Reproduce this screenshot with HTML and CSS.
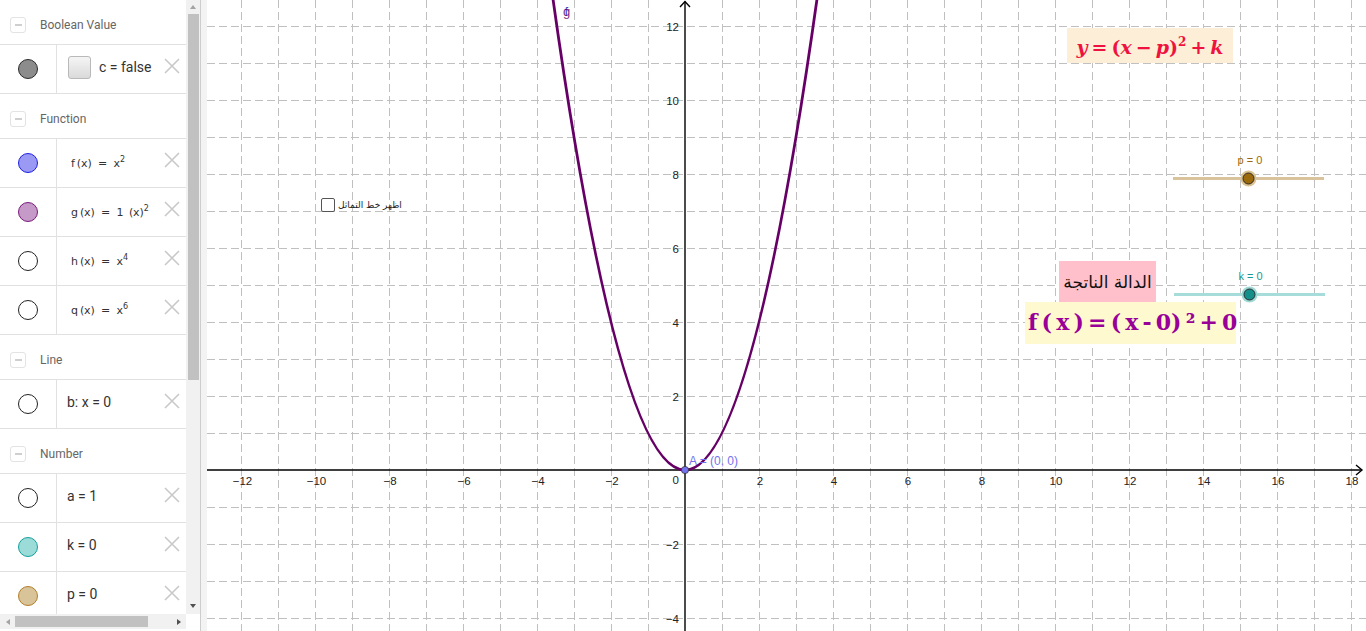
FILE: index.html
```html
<!DOCTYPE html>
<html lang="en">
<head>
<meta charset="utf-8">
<title>GeoGebra</title>
<link rel="stylesheet" href="styles.css">
</head>
<body>
<div class="app">
  <aside class="algebra">
    <div class="alg-body">
      <div class="alg-list">
        <div class="group"><span class="minus"></span><span class="gtitle">Boolean Value</span></div>
        <div class="item">
          <div class="marble"><span class="dot dot-gray"></span></div>
          <div class="content pad-cb"><span class="cbx"></span><span class="expr">c = false</span></div>
          <svg class="del" viewBox="0 0 16 16"><path d="M1 1L15 15M15 1L1 15"/></svg>
        </div>
        <div class="group"><span class="minus"></span><span class="gtitle">Function</span></div>
        <div class="item">
          <div class="marble"><span class="dot dot-blue"></span></div>
          <div class="content pad-fn"><span class="fn">f<span class="par">(x)</span> <span class="eq">=</span> x<sup>2</sup></span></div>
          <svg class="del" viewBox="0 0 16 16"><path d="M1 1L15 15M15 1L1 15"/></svg>
        </div>
        <div class="item">
          <div class="marble"><span class="dot dot-purple"></span></div>
          <div class="content pad-fn"><span class="fn">g<span class="par">(x)</span> <span class="eq">=</span> 1 <span class="par">(x)</span><sup>2</sup></span></div>
          <svg class="del" viewBox="0 0 16 16"><path d="M1 1L15 15M15 1L1 15"/></svg>
        </div>
        <div class="item">
          <div class="marble"><span class="dot dot-empty"></span></div>
          <div class="content pad-fn"><span class="fn">h<span class="par">(x)</span> <span class="eq">=</span> x<sup>4</sup></span></div>
          <svg class="del" viewBox="0 0 16 16"><path d="M1 1L15 15M15 1L1 15"/></svg>
        </div>
        <div class="item">
          <div class="marble"><span class="dot dot-empty"></span></div>
          <div class="content pad-fn"><span class="fn">q<span class="par">(x)</span> <span class="eq">=</span> x<sup>6</sup></span></div>
          <svg class="del" viewBox="0 0 16 16"><path d="M1 1L15 15M15 1L1 15"/></svg>
        </div>
        <div class="group"><span class="minus"></span><span class="gtitle">Line</span></div>
        <div class="item">
          <div class="marble"><span class="dot dot-empty"></span></div>
          <div class="content"><span class="expr">b: x = 0</span></div>
          <svg class="del" viewBox="0 0 16 16"><path d="M1 1L15 15M15 1L1 15"/></svg>
        </div>
        <div class="group"><span class="minus"></span><span class="gtitle">Number</span></div>
        <div class="item">
          <div class="marble"><span class="dot dot-empty"></span></div>
          <div class="content"><span class="expr">a = 1</span></div>
          <svg class="del" viewBox="0 0 16 16"><path d="M1 1L15 15M15 1L1 15"/></svg>
        </div>
        <div class="item">
          <div class="marble"><span class="dot dot-teal"></span></div>
          <div class="content"><span class="expr">k = 0</span></div>
          <svg class="del" viewBox="0 0 16 16"><path d="M1 1L15 15M15 1L1 15"/></svg>
        </div>
        <div class="item">
          <div class="marble"><span class="dot dot-tan"></span></div>
          <div class="content"><span class="expr">p = 0</span></div>
          <svg class="del" viewBox="0 0 16 16"><path d="M1 1L15 15M15 1L1 15"/></svg>
        </div>
      </div>
      <div class="vscroll">
        <span class="arrow-area"><span class="tri tri-up"></span></span>
        <div class="vthumb"></div>
        <div class="spacer"></div>
        <span class="arrow-area arrow-down"><span class="tri tri-down"></span></span>
      </div>
    </div>
    <div class="hscroll">
      <div class="hbar">
        <span class="harrow"><span class="tri tri-left"></span></span>
        <div class="hthumb"></div>
        <div class="spacer"></div>
        <span class="harrow"><span class="tri tri-right"></span></span>
      </div>
      <div class="corner"></div>
    </div>
  </aside>
  <div class="splitter"></div>
  <main class="graphics">
    <svg class="plot" width="1159" height="631" viewBox="207 0 1159 631" xmlns="http://www.w3.org/2000/svg">
      <path class="grid" d="M241.5 0V631M278.5 0V631M315.5 0V631M352.5 0V631M389.5 0V631M426.5 0V631M463.5 0V631M500.5 0V631M537.5 0V631M574.5 0V631M611.5 0V631M648.5 0V631M722.5 0V631M759.5 0V631M796.5 0V631M833.5 0V631M870.5 0V631M907.5 0V631M944.5 0V631M981.5 0V631M1018.5 0V631M1055.5 0V631M1092.5 0V631M1129.5 0V631M1166.5 0V631M1203.5 0V631M1240.5 0V631M1277.5 0V631M1314.5 0V631M1351.5 0V631"/>
      <path class="grid" d="M207 26.5H1366M207 63.5H1366M207 100.5H1366M207 137.5H1366M207 174.5H1366M207 211.5H1366M207 248.5H1366M207 285.5H1366M207 322.5H1366M207 359.5H1366M207 396.5H1366M207 433.5H1366M207 507.5H1366M207 544.5H1366M207 581.5H1366M207 618.5H1366"/>
      <path class="axis" d="M207 470H1362M685 631V1.5"/>
      <path class="axis" d="M1356 465L1362 470L1356 475M680 7L685 1.5L690 7"/>
      <g class="xlab">
        <text x="242.5" y="485">−12</text>
        <text x="316.5" y="485">−10</text>
        <text x="390" y="485">−8</text>
        <text x="464" y="485">−6</text>
        <text x="538" y="485">−4</text>
        <text x="612" y="485">−2</text>
        <text x="760" y="485">2</text>
        <text x="834" y="485">4</text>
        <text x="908" y="485">6</text>
        <text x="982" y="485">8</text>
        <text x="1056" y="485">10</text>
        <text x="1130" y="485">12</text>
        <text x="1204" y="485">14</text>
        <text x="1278" y="485">16</text>
        <text x="1352" y="485">18</text>
      </g>
      <g class="ylab">
        <text x="679" y="30.5">12</text>
        <text x="679" y="104.5">10</text>
        <text x="679" y="178.5">8</text>
        <text x="679" y="252.5">6</text>
        <text x="679" y="326.5">4</text>
        <text x="679" y="400.5">2</text>
        <text x="679" y="484">0</text>
        <text x="679" y="548.5">−2</text>
        <text x="679" y="622.5">−4</text>
      </g>
      <path class="curve" d="M551.8 -9.5Q685 949.5 818.2 -9.5"/>
      <text class="lbl-fg" x="563" y="16"><tspan class="c-f">f</tspan><tspan class="c-g" dx="-5">g</tspan></text>
      <circle class="pt" cx="685" cy="470" r="3.6"/>
      <text class="lbl-a" x="689" y="465">A = (0, 0)</text>
      <line class="sl-p" x1="1173" y1="178.5" x2="1324" y2="178.5"/>
      <circle class="halo-p" cx="1248.5" cy="178.5" r="8"/>
      <circle class="knob-p" cx="1248.5" cy="178.5" r="5.5"/>
      <text class="lbl-p" x="1250" y="164">p = 0</text>
      <line class="sl-k" x1="1174" y1="294.5" x2="1325" y2="294.5"/>
      <circle class="halo-k" cx="1249.5" cy="294.5" r="8"/>
      <circle class="knob-k" cx="1249.5" cy="294.5" r="5.5"/>
      <text class="lbl-k" x="1250.5" y="280">k = 0</text>
    </svg>
    <label class="sym-toggle"><span class="sym-box"></span><span class="sym-text" dir="rtl">اظهر خط التماثل</span></label>
    <div class="formula-box"><span class="latex"><i>y</i><span class="op">=</span>(<i>x</i><span class="op">−</span><i>p</i>)<sup>2</sup><span class="op">+</span><i>k</i></span></div>
    <div class="title-box" dir="rtl">الدالة الناتجة</div>
    <div class="result-box">f ( x ) = ( x - 0) ² + 0</div>
  </main>
</div>
</body>
</html>
```

FILE: styles.css
```css
* { box-sizing: border-box; }
html, body { margin: 0; padding: 0; }
body {
  width: 1366px;
  height: 631px;
  overflow: hidden;
  background: #fff;
  color: #333;
  font-family: Roboto, "Liberation Sans", sans-serif;
}
.app { display: flex; height: 631px; }

/* ---------- algebra view ---------- */
.algebra {
  width: 201px;
  flex: none;
  border-right: 1px solid #cdcdcd;
  display: flex;
  flex-direction: column;
  background: #fff;
}
.alg-body { display: flex; height: 614px; }
.alg-list { width: 186px; overflow: hidden; }

.group {
  height: 45px;
  border-bottom: 1px solid #e1e1e1;
  display: flex;
  align-items: center;
  padding-left: 10px;
  padding-top: 5px;
}
.minus {
  width: 16px;
  height: 16px;
  border: 1px solid #e3e3e3;
  border-radius: 3px;
  display: flex;
  align-items: center;
  justify-content: center;
}
.minus::before { content: ""; width: 7px; height: 2px; background: #cfcfcf; }
.gtitle { margin-left: 14px; font-size: 12px; color: #666; }

.item {
  height: 49px;
  border-bottom: 1px solid #e1e1e1;
  display: flex;
  align-items: center;
}
.marble {
  width: 57px;
  height: 100%;
  flex: none;
  border-right: 1px solid #e1e1e1;
  display: flex;
  align-items: center;
  justify-content: center;
}
.dot { width: 20px; height: 20px; border-radius: 50%; border: 1px solid #222; background: #fff; }
.dot-gray { background: #8c8c8c; border-color: #2a2a2a; }
.dot-blue { background: #9a9af4; border-color: #1f1fe6; }
.dot-purple { background: #c69ac8; border-color: #7a1a7a; }
.dot-empty { background: #fff; border-color: #222; }
.dot-teal { background: #9cdcd8; border-color: #13a09c; }
.dot-tan { background: #d9c399; border-color: #b07f2a; }

.content {
  flex: 1;
  height: 100%;
  display: flex;
  align-items: center;
  padding-left: 10px;
  padding-bottom: 4px;
  white-space: nowrap;
}
.pad-cb { padding-left: 11px; padding-bottom: 5px; }
.pad-fn { padding-left: 14px; padding-bottom: 0; padding-top: 0; }
.cbx {
  width: 23px;
  height: 23px;
  border: 1px solid #b9b9b9;
  border-radius: 3px;
  background: linear-gradient(#f5f5f5, #dadada);
  margin-right: 8px;
  margin-top: 2px;
}
.expr { font-size: 14px; color: #333; word-spacing: 0; }
.fn { font-size: 11px; color: #333; font-family: "DejaVu Sans", sans-serif; letter-spacing: -0.1px; }
.fn .par { margin-left: 2px; }
.fn .eq { margin: 0 3px; }
.fn sup { font-size: 8px; vertical-align: 5px; line-height: 0; }
.del {
  width: 16px;
  height: 16px;
  flex: none;
  margin-right: 6px;
  margin-bottom: 7px;
  fill: none;
  stroke: #c9c9c9;
  stroke-width: 1.6;
}

/* scrollbars */
.vscroll {
  width: 14px;
  background: #f1f1f1;
  display: flex;
  flex-direction: column;
  align-items: center;
}
.arrow-area { height: 14px; width: 14px; display: flex; align-items: center; justify-content: center; flex: none; }
.arrow-down { height: 17px; }
.vthumb { width: 11px; height: 366px; background: #c1c1c1; flex: none; }
.spacer { flex: 1; }
.tri { width: 0; height: 0; border-style: solid; }
.tri-up { border-width: 0 3.5px 4px 3.5px; border-color: transparent transparent #a3a3a3 transparent; }
.tri-down { border-width: 4px 3.5px 0 3.5px; border-color: #505050 transparent transparent transparent; }
.tri-left { border-width: 3.5px 4px 3.5px 0; border-color: transparent #a3a3a3 transparent transparent; }
.tri-right { border-width: 3.5px 0 3.5px 4px; border-color: transparent transparent transparent #505050; }

.hscroll { height: 15px; display: flex; }
.hbar { width: 186px; height: 15px; background: #f1f1f1; display: flex; align-items: center; }
.harrow { width: 15px; height: 15px; flex: none; display: flex; align-items: center; justify-content: center; }
.hthumb { width: 133px; height: 11px; background: #c1c1c1; flex: none; }
.corner { flex: 1; background: #fff; }

.splitter { width: 6px; flex: none; background: #f3f3f3; }

/* ---------- graphics view ---------- */
.graphics { flex: 1; position: relative; overflow: hidden; background: #fff; }
.plot { display: block; }
.grid { fill: none; stroke: #c0c0c0; stroke-width: 1; stroke-dasharray: 8 4; shape-rendering: crispEdges; }
.axis { fill: none; stroke: #000; stroke-width: 1.4; }
.xlab text, .ylab text { font-family: "Liberation Sans", sans-serif; font-size: 11.5px; fill: #222; }
.xlab text { text-anchor: middle; }
.ylab text { text-anchor: end; }
.curve { fill: none; stroke: #660066; stroke-width: 2.8; }
.lbl-fg { font-family: "Liberation Sans", sans-serif; font-size: 13px; }
.c-f { fill: #3a3ad0; }
.c-g { fill: #660066; fill-opacity: 0.85; }
.pt { fill: #7373f0; stroke: #333; stroke-width: 0.8; }
.lbl-a { font-family: "Liberation Sans", sans-serif; font-size: 12px; fill: #7272ee; }
.sl-p { stroke: #d8c39c; stroke-width: 3; }
.halo-p { fill: #dcc391; }
.knob-p { fill: #9b6a0c; stroke: #2a2a2a; stroke-width: 1; }
.lbl-p { font-family: "Liberation Sans", sans-serif; font-size: 11px; fill: #9b6a0c; text-anchor: middle; }
.sl-k { stroke: #a6dcda; stroke-width: 3; }
.halo-k { fill: #9fd9d6; }
.knob-k { fill: #138f8c; stroke: #2a2a2a; stroke-width: 1; }
.lbl-k { font-family: "Liberation Sans", sans-serif; font-size: 11px; fill: #1a9a97; text-anchor: middle; }

.sym-toggle {
  position: absolute;
  left: 114px;
  top: 198px;
  display: flex;
  align-items: center;
  gap: 3px;
}
.sym-box { width: 14px; height: 14px; border: 1px solid #555; border-radius: 2px; background: #fff; }
.sym-text { font-family: "DejaVu Sans", sans-serif; font-size: 9px; color: #222; }

.formula-box {
  position: absolute;
  left: 860px;
  top: 28px;
  width: 166px;
  height: 35px;
  background: #fdeed7;
  display: flex;
  align-items: center;
  justify-content: center;
}
.latex {
  font-family: "DejaVu Serif", "Liberation Serif", serif;
  font-weight: bold;
  font-size: 19px;
  color: #ef1240;
  white-space: nowrap;
  padding-top: 2px;
}
.latex i { font-style: italic; }
.latex .op { margin: 0 4px; font-style: normal; }
.latex sup { font-size: 12px; vertical-align: 8px; line-height: 0; }

.title-box {
  position: absolute;
  left: 852px;
  top: 261px;
  width: 97px;
  height: 41px;
  background: #ffc0cb;
  display: flex;
  align-items: center;
  justify-content: center;
  font-family: "DejaVu Sans", sans-serif;
  font-size: 17px;
  color: #111;
  white-space: nowrap;
}
.result-box {
  position: absolute;
  left: 818px;
  top: 302px;
  width: 211px;
  height: 42px;
  background: #fff9cf;
  display: flex;
  align-items: center;
  padding-left: 3px;
  padding-bottom: 3px;
  font-family: "DejaVu Serif", serif;
  font-weight: bold;
  font-size: 22px;
  color: #980098;
  white-space: nowrap;
  word-spacing: -3.5px;
}
```
